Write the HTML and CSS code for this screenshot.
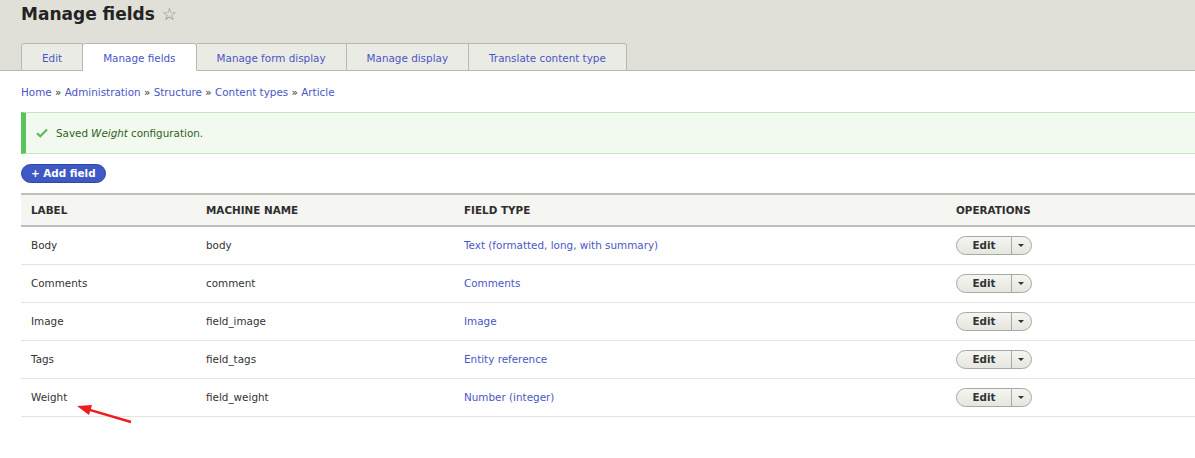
FILE: index.html
```html
<!DOCTYPE html>
<html lang="en">
<head>
  <meta charset="UTF-8">
  <title>Manage fields</title>
  <link rel="stylesheet" href="styles.css">
</head>
<body>
  <div class="header">
    <h1 class="page-title">Manage fields <span class="star">&#9734;</span></h1>
    <ul class="tabs">
      <li><a href="#">Edit</a></li>
      <li class="active"><a href="#">Manage fields</a></li>
      <li><a href="#">Manage form display</a></li>
      <li><a href="#">Manage display</a></li>
      <li><a href="#">Translate content type</a></li>
    </ul>
  </div>

  <div class="content">
    <div class="breadcrumb">
      <a href="#">Home</a> &raquo; <a href="#">Administration</a> &raquo; <a href="#">Structure</a> &raquo; <a href="#">Content types</a> &raquo; <a href="#">Article</a>
    </div>

    <div class="message">
      <svg class="check" width="12" height="10" viewBox="0 0 12 10"><path d="M1 5.2 L4.3 8.3 L11 1.5" fill="none" stroke="#5cb85c" stroke-width="2.2"/></svg>
      Saved <em>Weight</em> configuration.
    </div>

    <a href="#" class="add-button">+ Add field</a>

    <table class="fields">
      <thead>
        <tr>
          <th class="col-label">Label</th>
          <th class="col-machine">Machine name</th>
          <th class="col-type">Field type</th>
          <th>Operations</th>
        </tr>
      </thead>
      <tbody>
        <tr>
          <td>Body</td>
          <td>body</td>
          <td><a href="#">Text (formatted, long, with summary)</a></td>
          <td><span class="dropbutton"><span class="edit">Edit</span><span class="toggle"></span></span></td>
        </tr>
        <tr>
          <td>Comments</td>
          <td>comment</td>
          <td><a href="#">Comments</a></td>
          <td><span class="dropbutton"><span class="edit">Edit</span><span class="toggle"></span></span></td>
        </tr>
        <tr>
          <td>Image</td>
          <td>field_image</td>
          <td><a href="#">Image</a></td>
          <td><span class="dropbutton"><span class="edit">Edit</span><span class="toggle"></span></span></td>
        </tr>
        <tr>
          <td>Tags</td>
          <td>field_tags</td>
          <td><a href="#">Entity reference</a></td>
          <td><span class="dropbutton"><span class="edit">Edit</span><span class="toggle"></span></span></td>
        </tr>
        <tr>
          <td>Weight</td>
          <td>field_weight</td>
          <td><a href="#">Number (integer)</a></td>
          <td><span class="dropbutton"><span class="edit">Edit</span><span class="toggle"></span></span></td>
        </tr>
      </tbody>
    </table>
  </div>

  <svg class="arrow" width="70" height="30" viewBox="0 0 70 30">
    <line x1="18" y1="9.3" x2="61" y2="22" stroke="#ee1c1c" stroke-width="2.4"/>
    <polygon points="7,6 19,15 22,5" fill="#ee1c1c"/>
  </svg>
</body>
</html>
```

FILE: styles.css
```css
body {
  margin: 0;
  font-family: "DejaVu Sans", Verdana, sans-serif;
  font-size: 10.4px;
  color: #333;
  background: #fff;
}

a {
  color: #4a56c6;
  text-decoration: none;
}

.header {
  background: #e0e0d8;
  padding: 0 21px;
  border-bottom: 1px solid #b8b8b2;
}

.page-title {
  margin: 0;
  height: 43px;
  font-size: 17px;
  font-weight: bold;
  color: #232323;
  line-height: 28px;
}

.star {
  font-size: 17px;
  font-weight: normal;
  color: #85857d;
  margin-left: 1px;
}

.tabs {
  list-style: none;
  margin: 0;
  padding: 0;
  display: flex;
  margin-bottom: -1px;
}

.tabs li {
  background: #ebebe5;
  border: 1px solid #b8b8b2;
  border-left: none;
  height: 26px;
}

.tabs li:first-child {
  border-left: 1px solid #b8b8b2;
  border-top-left-radius: 3px;
}

.tabs li:last-child {
  border-top-right-radius: 3px;
}

.tabs li.active {
  background: #fff;
  border-bottom-color: #fff;
  border-radius: 3px 3px 0 0;
}

.tabs a {
  display: block;
  line-height: 28px;
  padding: 0 20px;
}

.content {
  padding: 0 0 0 21px;
}

.breadcrumb {
  padding-top: 15px;
  line-height: 13px;
}

.message {
  margin-top: 13px;
  height: 40px;
  display: flex;
  align-items: center;
  background: #f2faef;
  border: 1px solid #c5e6bb;
  border-right: none;
  border-left: 5px solid #5bc35b;
  color: #325e1c;
  padding-left: 10px;
}

.message em {
  margin: 0 3px;
}

.check {
  margin-right: 8px;
}

.add-button {
  display: inline-block;
  margin-top: 10px;
  background: #3e58c4;
  border: 1px solid #2f46a8;
  color: #fff;
  font-weight: bold;
  border-radius: 10px;
  padding: 0 9px;
  line-height: 17px;
  height: 17px;
}

.fields {
  margin-top: 10px;
  width: 100%;
  border-collapse: collapse;
}

.fields th {
  background: #f5f5f2;
  border-top: 2px solid #bfbfba;
  border-bottom: 2px solid #bfbfba;
  text-align: left;
  text-transform: uppercase;
  font-weight: bold;
  height: 30px;
  padding: 0 10px;
  color: #2e2e2e;
}

.fields td {
  height: 36px;
  padding: 0 10px 1px;
  border-bottom: 1px solid #e4e4df;
}

.col-label {
  width: 155px;
}

.col-machine {
  width: 238px;
}

.col-type {
  width: 472px;
}

.dropbutton {
  display: inline-flex;
  height: 17px;
  border: 1px solid #a9a9a4;
  border-radius: 10px;
  background: linear-gradient(#f5f5f1, #e6e6e0);
  overflow: hidden;
  vertical-align: middle;
}

.dropbutton .edit {
  width: 54px;
  text-align: center;
  font-weight: bold;
  line-height: 17px;
  color: #333;
  border-right: 1px solid #a9a9a4;
}

.dropbutton .toggle {
  width: 19px;
  position: relative;
}

.dropbutton .toggle::after {
  content: "";
  position: absolute;
  left: 6px;
  top: 7px;
  border-left: 3px solid transparent;
  border-right: 3px solid transparent;
  border-top: 3px solid #333;
}

.arrow {
  position: absolute;
  left: 70px;
  top: 400px;
}
```
